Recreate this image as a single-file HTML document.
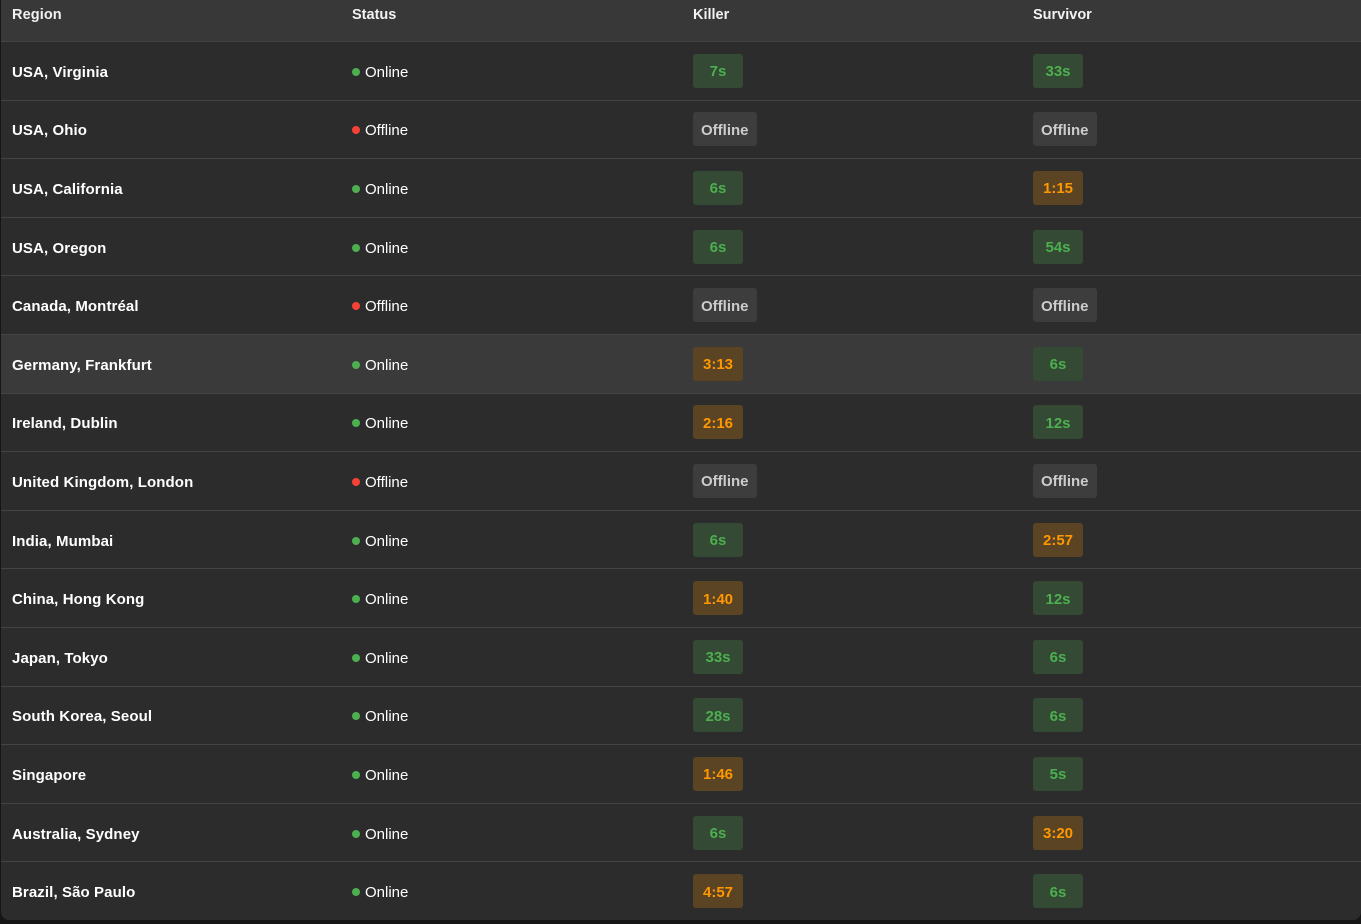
<!DOCTYPE html>
<html><head><meta charset="utf-8"><style>
body{margin:0;background:#161616;width:1361px;height:924px;overflow:hidden;font-family:"Liberation Sans",sans-serif;}
.t{position:absolute;left:1px;top:0;width:1360px;height:920px;background:#2c2c2c;border-radius:0 0 8px 8px;overflow:hidden}
.h{height:41px;background:#383838;font-weight:bold;font-size:14.5px;color:#f2f2f2;border-bottom:1px solid #444}
.h>div{top:7px}
.r{height:57.6px;display:flex;align-items:center;border-bottom:1px solid #444;color:#fff;font-size:15px}
.r>div{margin-top:3px}
.r.hv{background:#3a3a3a}
.c1{left:11px;font-weight:bold;letter-spacing:0.1px}.c2{left:351px}.c3{left:692px}.c4{left:1032px}
.h>div,.r>div{position:absolute}
.row{position:relative}
.dot{display:inline-block;width:8px;height:8px;border-radius:50%;margin-right:5px;vertical-align:1px}
.on{background:#4caf50}.off{background:#f44336}
.r>.c3,.r>.c4{margin-top:0}
.b{display:inline-flex;align-items:center;justify-content:center;min-width:50px;box-sizing:border-box;height:34px;border-radius:3px;font-weight:bold;font-size:15px;padding:2px 8px 0}
.g{background:#344a34;color:#4caf50}.o{background:#5b4423;color:#ff9800}.x{background:#3d3d3d;color:#ccc}
</style></head><body><div class="t">
<div class="h row"><div class="c1">Region</div><div class="c2">Status</div><div class="c3">Killer</div><div class="c4">Survivor</div></div>
<div class="r row"><div class="c1">USA, Virginia</div><div class="c2"><span class="dot on"></span>Online</div><div class="c3"><span class="b g">7s</span></div><div class="c4"><span class="b g">33s</span></div></div>
<div class="r row"><div class="c1">USA, Ohio</div><div class="c2"><span class="dot off"></span>Offline</div><div class="c3"><span class="b x">Offline</span></div><div class="c4"><span class="b x">Offline</span></div></div>
<div class="r row"><div class="c1">USA, California</div><div class="c2"><span class="dot on"></span>Online</div><div class="c3"><span class="b g">6s</span></div><div class="c4"><span class="b o">1:15</span></div></div>
<div class="r row"><div class="c1">USA, Oregon</div><div class="c2"><span class="dot on"></span>Online</div><div class="c3"><span class="b g">6s</span></div><div class="c4"><span class="b g">54s</span></div></div>
<div class="r row"><div class="c1">Canada, Montréal</div><div class="c2"><span class="dot off"></span>Offline</div><div class="c3"><span class="b x">Offline</span></div><div class="c4"><span class="b x">Offline</span></div></div>
<div class="r row hv"><div class="c1">Germany, Frankfurt</div><div class="c2"><span class="dot on"></span>Online</div><div class="c3"><span class="b o">3:13</span></div><div class="c4"><span class="b g">6s</span></div></div>
<div class="r row"><div class="c1">Ireland, Dublin</div><div class="c2"><span class="dot on"></span>Online</div><div class="c3"><span class="b o">2:16</span></div><div class="c4"><span class="b g">12s</span></div></div>
<div class="r row"><div class="c1">United Kingdom, London</div><div class="c2"><span class="dot off"></span>Offline</div><div class="c3"><span class="b x">Offline</span></div><div class="c4"><span class="b x">Offline</span></div></div>
<div class="r row"><div class="c1">India, Mumbai</div><div class="c2"><span class="dot on"></span>Online</div><div class="c3"><span class="b g">6s</span></div><div class="c4"><span class="b o">2:57</span></div></div>
<div class="r row"><div class="c1">China, Hong Kong</div><div class="c2"><span class="dot on"></span>Online</div><div class="c3"><span class="b o">1:40</span></div><div class="c4"><span class="b g">12s</span></div></div>
<div class="r row"><div class="c1">Japan, Tokyo</div><div class="c2"><span class="dot on"></span>Online</div><div class="c3"><span class="b g">33s</span></div><div class="c4"><span class="b g">6s</span></div></div>
<div class="r row"><div class="c1">South Korea, Seoul</div><div class="c2"><span class="dot on"></span>Online</div><div class="c3"><span class="b g">28s</span></div><div class="c4"><span class="b g">6s</span></div></div>
<div class="r row"><div class="c1">Singapore</div><div class="c2"><span class="dot on"></span>Online</div><div class="c3"><span class="b o">1:46</span></div><div class="c4"><span class="b g">5s</span></div></div>
<div class="r row"><div class="c1">Australia, Sydney</div><div class="c2"><span class="dot on"></span>Online</div><div class="c3"><span class="b g">6s</span></div><div class="c4"><span class="b o">3:20</span></div></div>
<div class="r row" style="border-bottom:none"><div class="c1">Brazil, São Paulo</div><div class="c2"><span class="dot on"></span>Online</div><div class="c3"><span class="b o">4:57</span></div><div class="c4"><span class="b g">6s</span></div></div>
</div></body></html>
